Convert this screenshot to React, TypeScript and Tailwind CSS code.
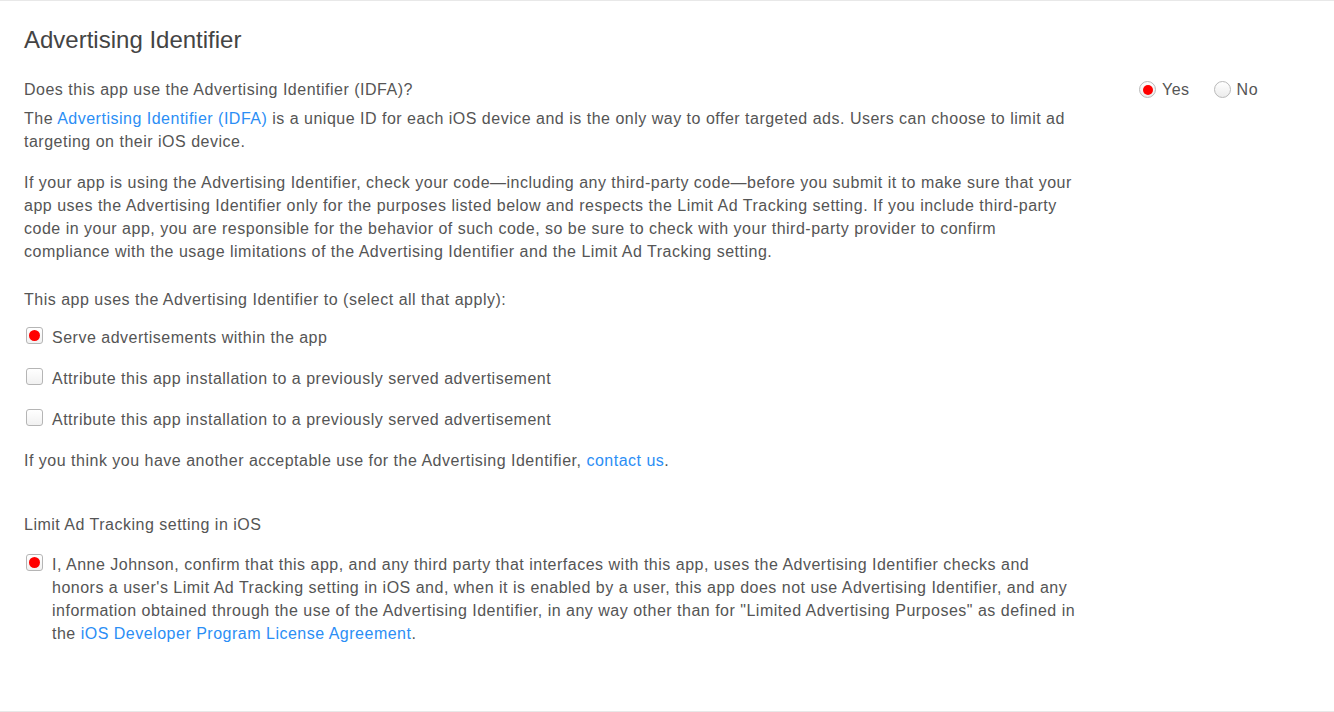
import React from "react";

function Radio({ checked, label }: { checked?: boolean; label: string }) {
  return (
    <label className="flex items-center gap-[6px]">
      <span className="w-[17px] h-[17px] rounded-full border border-[#b9b9b9] bg-gradient-to-b from-white to-[#ececec] flex items-center justify-center">
        {checked && <span className="w-[10px] h-[10px] rounded-full bg-[#ff0000]" />}
      </span>
      <span>{label}</span>
    </label>
  );
}

function Check({ checked }: { checked?: boolean }) {
  return (
    <span className="mt-[1px] w-[17px] h-[17px] shrink-0 rounded-[3px] border border-[#b5b5b5] bg-gradient-to-b from-white to-[#f1f1f1] flex items-center justify-center">
      {checked && <span className="w-[11px] h-[11px] rounded-full bg-[#ff0000]" />}
    </span>
  );
}

const link = "text-[#2b8ef5]";

export default function App() {
  return (
    <div
      className="w-[1334px] h-[712px] bg-white border-t border-b border-[#e8e8e8] text-[#555] text-[16px] leading-[23px] tracking-[0.5px]"
      style={{ fontFamily: '"Liberation Sans", Arial, sans-serif' }}
    >
      <div className="pl-[24px] pt-[24px]">
        <h1 className="text-[24px] leading-[30px] text-[#444] tracking-normal">Advertising Identifier</h1>

        <div className="mt-[23px] flex items-start">
          <div className="w-[1062px]">
            <p>Does this app use the Advertising Identifier (IDFA)?</p>
            <p className="mt-[6px]">
              The <span className={link}>Advertising Identifier (IDFA)</span> is a unique ID for each iOS device and is the only way to offer targeted ads. Users can choose to limit ad targeting on their iOS device.
            </p>
            <p className="mt-[18px] w-[1056px]">
              If your app is using the Advertising Identifier, check your code—including any third-party code—before you submit it to make sure that your app uses the Advertising Identifier only for the purposes listed below and respects the Limit Ad Tracking setting. If you include third-party code in your app, you are responsible for the behavior of such code, so be sure to check with your third-party provider to confirm compliance with the usage limitations of the Advertising Identifier and the Limit Ad Tracking setting.
            </p>
            <p className="mt-[25px]">This app uses the Advertising Identifier to (select all that apply):</p>

            <div className="mt-[15px] flex flex-col gap-[18px]">
              <div className="flex items-start gap-[9px] pl-[2px]">
                <Check checked />
                <span>Serve advertisements within the app</span>
              </div>
              <div className="flex items-start gap-[9px] pl-[2px]">
                <Check />
                <span>Attribute this app installation to a previously served advertisement</span>
              </div>
              <div className="flex items-start gap-[9px] pl-[2px]">
                <Check />
                <span>Attribute this app installation to a previously served advertisement</span>
              </div>
            </div>

            <p className="mt-[18px]">
              If you think you have another acceptable use for the Advertising Identifier, <span className={link}>contact us</span>.
            </p>

            <p className="mt-[41px]">Limit Ad Tracking setting in iOS</p>

            <div className="mt-[17px] flex items-start gap-[9px] pl-[2px]">
              <Check checked />
              <span className="w-[1027px]">
                I, Anne Johnson, confirm that this app, and any third party that interfaces with this app, uses the Advertising Identifier checks and honors a user's Limit Ad Tracking setting in iOS and, when it is enabled by a user, this app does not use Advertising Identifier, and any information obtained through the use of the Advertising Identifier, in any way other than for "Limited Advertising Purposes" as defined in the <span className={link}>iOS Developer Program License Agreement</span>.
              </span>
            </div>
          </div>

          <div className="ml-[53px] flex gap-[24px]">
            <Radio checked label="Yes" />
            <Radio label="No" />
          </div>
        </div>
      </div>
    </div>
  );
}
